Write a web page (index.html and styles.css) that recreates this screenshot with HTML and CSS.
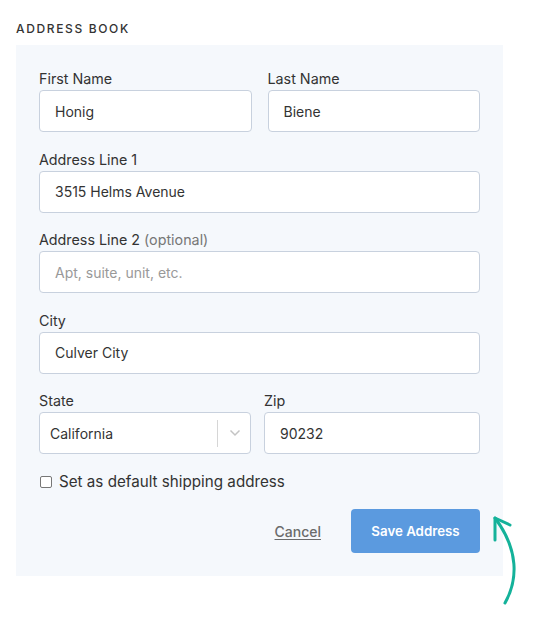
FILE: index.html
```html
<!DOCTYPE html>
<html lang="en">
<head>
<meta charset="utf-8">
<title>Address Book</title>
<link rel="stylesheet" href="styles.css">
</head>
<body>
<div class="page">
  <h2 class="heading">ADDRESS BOOK</h2>
  <form class="panel">
    <div class="row">
      <div class="field">
        <label class="label">First Name</label>
        <div class="input">Honig</div>
      </div>
      <div class="field">
        <label class="label">Last Name</label>
        <div class="input">Biene</div>
      </div>
    </div>
    <div class="field">
      <label class="label">Address Line 1</label>
      <div class="input">3515 Helms Avenue</div>
    </div>
    <div class="field">
      <label class="label">Address Line 2 <span class="opt">(optional)</span></label>
      <div class="input placeholder">Apt, suite, unit, etc.</div>
    </div>
    <div class="field">
      <label class="label">City</label>
      <div class="input">Culver City</div>
    </div>
    <div class="row row-state">
      <div class="field state">
        <label class="label">State</label>
        <div class="input select">
          <span class="sel-value">California</span>
          <span class="sel-sep"></span>
          <svg class="chev" width="12" height="8" viewBox="0 0 12 8"><path d="M1.5 1.5 L6 6 L10.5 1.5" fill="none" stroke="#c4c4c4" stroke-width="1.5"/></svg>
        </div>
      </div>
      <div class="field zip">
        <label class="label">Zip</label>
        <div class="input">90232</div>
      </div>
    </div>
    <div class="check">
      <span class="box"></span>
      <span class="check-text">Set as default shipping address</span>
    </div>
    <div class="actions">
      <a class="cancel">Cancel</a>
      <button type="button" class="save">Save Address</button>
    </div>
  </form>
  <svg class="arrow" width="40" height="100" viewBox="0 0 40 100">
    <path d="M17 93 C 30 70, 31 40, 7 8" fill="none" stroke="#14b29a" stroke-width="3" stroke-linecap="round"/>
    <path d="M7 30 L7 8 L22 15" fill="none" stroke="#14b29a" stroke-width="3" stroke-linecap="round" stroke-linejoin="round"/>
  </svg>
</div>
</body>
</html>
```

FILE: styles.css
```css
* { box-sizing: border-box; }
html, body {
  min-height: 100%;
}
body {
  margin: 0;
  background: #fff;
  font-family: Inter, "Noto Sans", sans-serif;
  color: #333;
}
.page {
  position: relative;
  min-height: 635px;
  padding: 21px 34px 0 16px;
}
.heading {
  margin: 0 0 8px;
  font-size: 12px;
  line-height: 16px;
  font-weight: 500;
  letter-spacing: 1.65px;
  color: #333;
}
.panel {
  width: 487px;
  background: #f5f8fc;
  padding: 26px 23px 23px;
  display: flex;
  flex-direction: column;
  gap: 19.5px;
}
.row {
  display: flex;
  gap: 16px;
}
.row .field { flex: 1; }
.row-state { gap: 13px; }
.row-state .state { flex: 0 0 212px; }
.row-state .zip { flex: 1; }
.field {
  display: flex;
  flex-direction: column;
}
.label {
  font-size: 14.3px;
  line-height: 16px;
  margin-bottom: 3px;
  color: #333;
}
.opt { color: #777; }
.input {
  height: 42px;
  background: #fff;
  border: 1px solid #c8d1de;
  border-radius: 4px;
  padding: 0 15px;
  display: flex;
  align-items: center;
  font-size: 14px;
  color: #333;
}
.placeholder { color: #999; }
.select {
  padding: 0 9px 0 10px;
}
.sel-value { flex: 1; }
.sel-sep {
  width: 1px;
  height: 27px;
  background: #d6d6d6;
  margin-right: 11px;
}
.chev { display: block; }
.check {
  display: flex;
  align-items: center;
  margin-top: -1px;
}
.box {
  width: 12px;
  height: 12px;
  border: 1px solid #777;
  border-radius: 2px;
  background: #fff;
  margin: 0 7px 0 1px;
}
.check-text {
  font-size: 15.2px;
  line-height: 18px;
  color: #333;
}
.actions {
  display: flex;
  justify-content: flex-end;
  align-items: center;
  gap: 30px;
  margin-top: -1px;
}
.cancel {
  font-size: 14px;
  font-weight: 500;
  color: #6b6b6b;
  text-decoration: underline;
  text-underline-offset: 2px;
}
.save {
  width: 129px;
  height: 44px;
  border: 0;
  border-radius: 4px;
  background: #5b9adf;
  color: #fff;
  font-family: Inter, "Noto Sans", sans-serif;
  font-size: 13.3px;
  font-weight: 600;
}
.arrow {
  position: absolute;
  left: 488px;
  top: 510px;
}
```
